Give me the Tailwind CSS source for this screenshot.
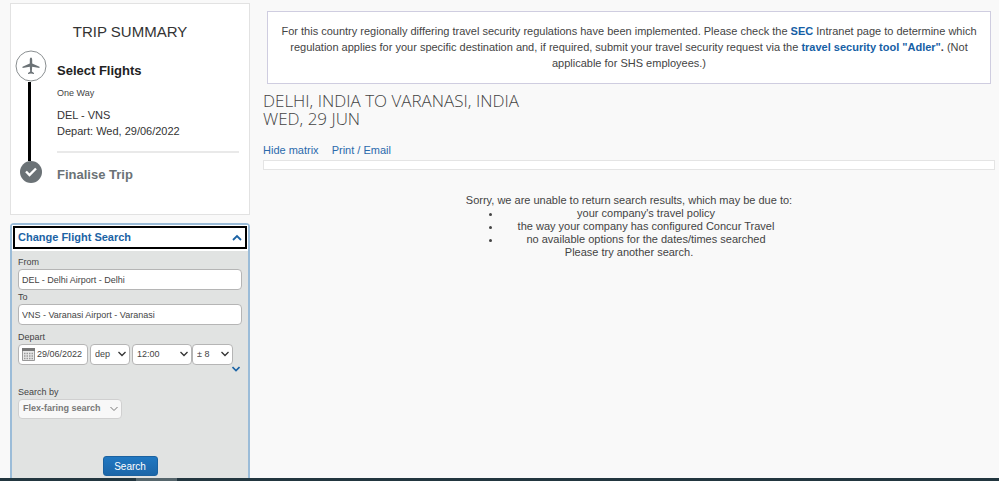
<!DOCTYPE html>
<html lang="en">
<head>
  <meta charset="UTF-8" />
  <meta name="viewport" content="width=device-width, initial-scale=1.0"/>
  <title>Flight Search Results</title>
  <script src="https://cdn.jsdelivr.net/npm/@tailwindcss/browser@4"></script>
  <style>
    body {
      font-family: 'Liberation Sans', Arial, sans-serif;
    }
  </style>
</head>
<body class="bg-[#f9f9f9] text-[#444] text-[11px] flex flex-col min-h-screen">

  <div class="flex-grow flex gap-[13px] pl-[10px] pr-1">

    <!-- Sidebar -->
    <aside class="w-60 shrink-0 flex flex-col gap-2 pt-[3px]">

      <!-- Trip summary -->
      <section class="bg-white border border-[#e2e2e2] pt-5 pb-[31px] px-1">
        <h2 class="text-[15px] leading-4 text-center text-[#333]">TRIP SUMMARY</h2>
        <div class="flex mt-[10px] gap-[10px]">
          <div class="w-8 shrink-0 flex flex-col items-center">
            <svg class="w-8 h-8 shrink-0" viewBox="0 0 32 32">
              <circle cx="16" cy="16" r="15" fill="#fff" stroke="#8a8f91"/>
              <path d="M16 7.500c.8 0 1.200 1 1.200 2.500v3.600l7.300 3.200v1.300l-7.300-1.300-.4 4.700 2.200 1.600v.9l-3-.6-3 .6v-.9l2.200-1.600-.4-4.700-7.300 1.300v-1.300l7.300-3.200V10c0-1.500.4-2.500 1.200-2.500z" fill="#6b7276"/>
            </svg>
            <div class="w-[3px] grow bg-black mr-[3px]"></div>
            <svg class="w-[22px] h-[22px] shrink-0" viewBox="0 0 22 22">
              <circle cx="11" cy="11" r="11" fill="#6b7276"/>
              <path d="M6 10.500l3.500 3.500 6.500-6.500" fill="none" stroke="#fff" stroke-width="2.400"/>
            </svg>
          </div>
          <div class="grow pr-1.5">
            <h3 class="text-[13px] leading-4 font-bold text-[#222] mt-[13px]">Select Flights</h3>
            <p class="text-[9px] leading-3 mt-2">One Way</p>
            <p class="leading-4 mt-2 text-[#333]">DEL - VNS<br>Depart: Wed, 29/06/2022</p>
            <hr class="border-t-2 border-[#e9e9e9] mt-3">
            <h3 class="text-[13px] leading-4 font-bold text-[#6b7276] mt-[14px]">Finalise Trip</h3>
          </div>
        </div>
      </section>

      <!-- Change search -->
      <section class="grow bg-[#e1e3e2] border-2 border-b-0 border-[#9bbcd8] rounded-t">
        <div class="bg-white p-px pb-0.5">
          <button class="w-full h-[23px] border-2 border-black flex items-center justify-between px-[3px] text-[11px] font-bold text-[#1b63a5]">
            Change Flight Search
            <svg class="w-2.5 h-2.5" viewBox="0 0 10 10"><path d="M1 7l4-4 4 4" fill="none" stroke="#1b63a5" stroke-width="1.800"/></svg>
          </button>
        </div>

        <form class="px-1.5 pt-1 text-[9px]">
          <label for="from" class="block leading-[14px]">From</label>
          <input type="text" id="from" value="DEL - Delhi Airport - Delhi" class="block w-full h-[21px] px-[3px] rounded-sm bg-white border border-[#b5b5b5]">
          <label for="to" class="block leading-[14px]">To</label>
          <input type="text" id="to" value="VNS - Varanasi Airport - Varanasi" class="block w-full h-[21px] px-[3px] rounded-sm bg-white border border-[#b5b5b5]">

          <label for="date" class="block leading-[14px] mt-[5px]">Depart</label>
          <div class="flex">
            <div class="w-[70px] h-[21px] flex items-center gap-0.5 pl-[3px] rounded-sm bg-white border border-[#b5b5b5]">
              <svg class="w-[13px] h-[13px] shrink-0" viewBox="0 0 13 13">
                <path d="M.5.5h12v12H.500z" fill="#e8e8e8" stroke="#999"/>
                <path d="M0 0h13v3H0z" fill="#777"/>
                <path d="M2 5.500h9M2 8h9M2 10.500h9" stroke="#999" stroke-width="1.500" stroke-dasharray="1.500 1"/>
              </svg>
              <input type="text" id="date" value="29/06/2022" class="w-full min-w-0">
            </div>
            <div class="relative ml-0.5">
              <select aria-label="Depart or arrive" class="appearance-none block w-10 h-[21px] pl-1 rounded-sm bg-white border border-[#b5b5b5]"><option>dep</option></select>
              <svg class="absolute right-1 top-1.5 w-2 h-2 pointer-events-none" viewBox="0 0 8 8"><path d="M.5 2l3.500 3.500L7.500 2" fill="none" stroke="#333" stroke-width="1.300"/></svg>
            </div>
            <div class="relative ml-0.5">
              <select aria-label="Time" class="appearance-none block w-[60px] h-[21px] pl-1 rounded-sm bg-white border border-[#b5b5b5]"><option>12:00</option></select>
              <svg class="absolute right-1 top-1.5 w-2 h-2 pointer-events-none" viewBox="0 0 8 8"><path d="M.5 2l3.500 3.500L7.500 2" fill="none" stroke="#333" stroke-width="1.300"/></svg>
            </div>
            <div class="relative">
              <select aria-label="Time window" class="appearance-none block w-[41px] h-[21px] pl-1 rounded-sm bg-white border border-[#b5b5b5]"><option>± 8</option></select>
              <svg class="absolute right-1 top-1.5 w-2 h-2 pointer-events-none" viewBox="0 0 8 8"><path d="M.5 2l3.500 3.500L7.500 2" fill="none" stroke="#333" stroke-width="1.300"/></svg>
            </div>
          </div>
          <div class="flex justify-end pr-0.5">
            <button type="button" aria-label="More options" class="h-2">
              <svg class="w-2 h-2" viewBox="0 0 8 8"><path d="M.5 2l3.500 3.500L7.500 2" fill="none" stroke="#1b63a5" stroke-width="1.600"/></svg>
            </button>
          </div>

          <label for="searchBy" class="block leading-[14px] mt-3">Search by</label>
          <div class="relative w-[104px]">
            <select id="searchBy" disabled class="appearance-none block w-full h-5 pl-1 rounded-sm bg-[#f8f8f8] border border-[#d0d0d0] font-bold text-[#777] opacity-100"><option>Flex-faring search</option></select>
            <svg class="absolute right-1 top-1.5 w-2 h-2 pointer-events-none" viewBox="0 0 8 8"><path d="M.5 2l3.500 3.500L7.500 2" fill="none" stroke="#777"/></svg>
          </div>

          <div class="flex justify-center mt-[37px] mb-0.5">
            <button type="button" class="w-[55px] h-5 rounded-[3px] border border-[#1b62a0] bg-gradient-to-b from-[#2078c2] to-[#1c66a8] text-white text-[10px]">Search</button>
          </div>
        </form>
      </section>
    </aside>

    <!-- Results -->
    <main class="grow min-w-0 pt-[11px]">
      <div class="mx-1 pt-[11px] pb-3 px-3 bg-white border border-[#cfcde0] text-center leading-4">
        For this country regionally differing travel security regulations have been implemented. Please check the <a href="#" class="font-bold text-[#1660a5]">SEC</a> Intranet page to determine which regulation applies for your specific destination and, if required, submit your travel security request via the <a href="#" class="font-bold text-[#1660a5]">travel security tool "Adler"</a><b>.</b> (Not applicable for SHS employees.)
      </div>

      <h1 class="mt-2 text-[17px] leading-[18px] font-light text-[#444] font-['Open_Sans',sans-serif]">DELHI, INDIA TO VARANASI, INDIA<br>WED, 29 JUN</h1>

      <div class="flex gap-[13px] mt-[14px] leading-4 text-[#2b6aac]">
        <a href="#">Hide matrix</a>
        <a href="#">Print / Email</a>
      </div>
      <div class="mt-0.5 h-[10px] bg-white border border-[#e4e4e4]"></div>

      <div class="mt-6 text-center leading-[13px]">
        <p>Sorry, we are unable to return search results, which may be due to:</p>
        <ul class="list-disc w-[322px] mx-auto pl-[34px]">
          <li>your company's travel policy</li>
          <li>the way your company has configured Concur Travel</li>
          <li>no available options for the dates/times searched</li>
        </ul>
        <p>Please try another search.</p>
      </div>
    </main>
  </div>

  <!-- Bottom bar -->
  <footer class="h-[3px] bg-[#22363f]">
    <div class="h-full w-[41px] ml-[136px] bg-[#56666c]"></div>
  </footer>

</body>
</html>
